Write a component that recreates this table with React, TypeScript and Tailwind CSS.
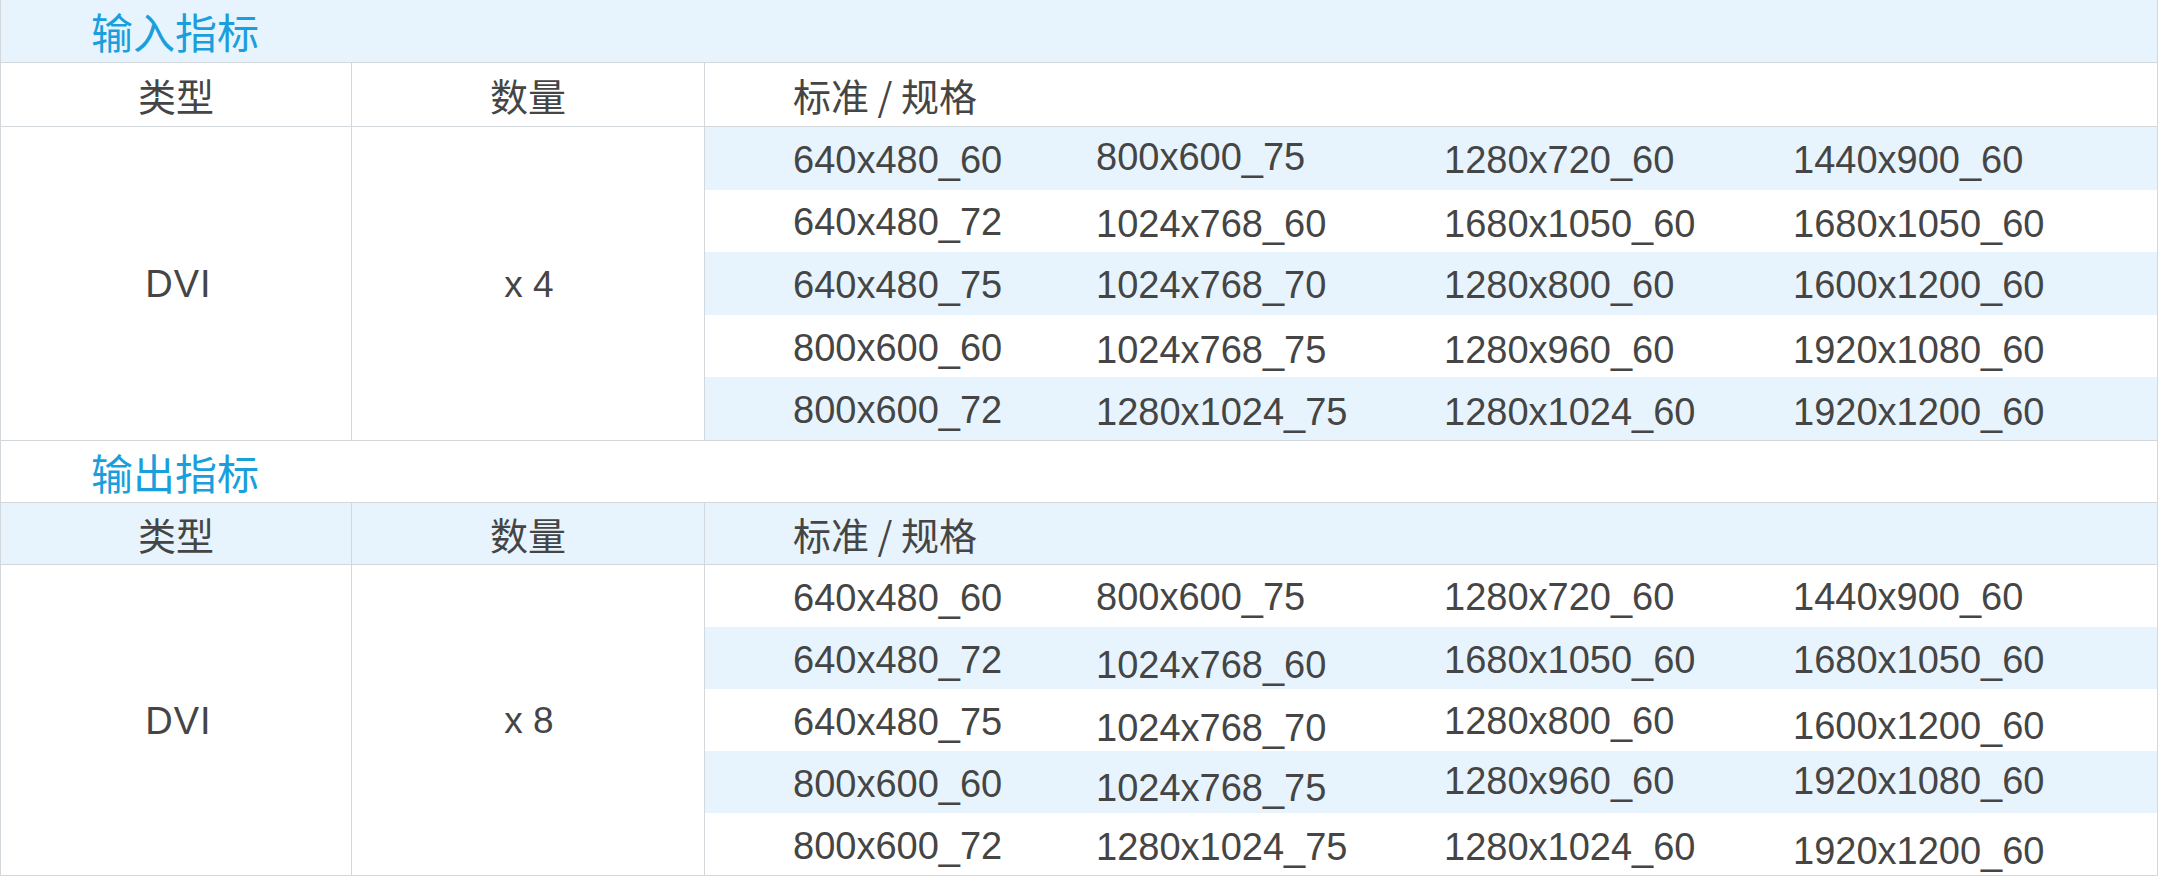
const specRows: string[][] = [
  ["640x480_60", "800x600_75", "1280x720_60", "1440x900_60"],
  ["640x480_72", "1024x768_60", "1680x1050_60", "1680x1050_60"],
  ["640x480_75", "1024x768_70", "1280x800_60", "1600x1200_60"],
  ["800x600_60", "1024x768_75", "1280x960_60", "1920x1080_60"],
  ["800x600_72", "1280x1024_75", "1280x1024_60", "1920x1200_60"],
];

// small per-cell vertical nudges, the source table is not perfectly aligned
const inputNudge: string[][] = [
  ["", "-translate-y-[3px]", "", ""],
  ["", "translate-y-[2px]", "translate-y-[2px]", "translate-y-[2px]"],
  ["", "", "", ""],
  ["", "translate-y-[2px]", "translate-y-[2px]", "translate-y-[2px]"],
  ["", "translate-y-[2px]", "translate-y-[2px]", "translate-y-[2px]"],
];

const outputNudge: string[][] = [
  ["", "-translate-y-[1px]", "-translate-y-[1px]", "-translate-y-[1px]"],
  ["", "translate-y-[5px]", "", ""],
  ["", "translate-y-[6px]", "-translate-y-[1px]", "translate-y-[4px]"],
  ["", "translate-y-[4px]", "-translate-y-[3px]", "-translate-y-[3px]"],
  ["", "translate-y-[1px]", "translate-y-[1px]", "translate-y-[5px]"],
];

interface SectionProps {
  readonly title: string;
  readonly count: string;
  readonly titleBg: string;
  readonly headerBg: string;
  readonly titleH: string;
  readonly headerH: string;
  readonly dataH: string;
  readonly stripeOdd: boolean;
  readonly nudge: string[][];
}

function SpecSection({ title, count, titleBg, headerBg, titleH, headerH, dataH, stripeOdd, nudge }: SectionProps) {
  return (
    <section>
      <div className={`${titleH} ${titleBg} flex items-center border-b border-[#d3d8dc] pl-[90px]`}>
        <h2 className="font-['Noto_Sans_CJK_SC',sans-serif] text-[42px] leading-none font-normal text-[#1a9fdc]">{title}</h2>
      </div>

      <div className={`${headerH} ${headerBg} grid grid-cols-[351px_353px_1fr] border-b border-[#d3d8dc] font-['Noto_Sans_CJK_SC',sans-serif] text-[38px] text-[#454545]`}>
        <div className="flex items-center justify-center border-r border-[#d3d8dc]">类型</div>
        <div className="flex items-center justify-center border-r border-[#d3d8dc]">数量</div>
        <div className="flex items-center pl-[88px]">标准 / 规格</div>
      </div>

      <div className={`${dataH} grid grid-cols-[351px_353px_1fr] border-b border-[#d3d8dc] text-[#454545]`}>
        <div className="flex items-center justify-center border-r border-[#d3d8dc] pt-[2px] pl-[5px] text-[38px] tracking-[1px]">DVI</div>
        <div className="flex items-center justify-center border-r border-[#d3d8dc] pt-[2px] pl-[2px] text-[37px]">{count}</div>
        <div className="grid grid-rows-5">
          {specRows.map((row, i) => {
            const striped = stripeOdd ? i % 2 === 0 : i % 2 === 1;
            return (
              <div
                key={i}
                className={`grid grid-cols-[303px_348px_349px_1fr] items-center pl-[88px] pt-[4px] text-[38px] ${striped ? "bg-[#e7f4fd]" : "bg-white"}`}
              >
                {row.map((v, j) => (
                  <span key={j} className={nudge[i][j]}>
                    {v}
                  </span>
                ))}
              </div>
            );
          })}
        </div>
      </div>
    </section>
  );
}

export default function App() {
  return (
    <div className="w-[2158px] border-x border-[#d3d8dc] bg-white font-['Liberation_Sans','Noto_Sans_CJK_SC',sans-serif]">
      <SpecSection
        title="输入指标"
        count="x 4"
        titleBg="bg-[#e7f4fd]"
        headerBg="bg-white"
        titleH="h-[63px]"
        headerH="h-[64px]"
        dataH="h-[314px]"
        stripeOdd
        nudge={inputNudge}
      />
      <SpecSection
        title="输出指标"
        count="x 8"
        titleBg="bg-white"
        headerBg="bg-[#e7f4fd]"
        titleH="h-[62px]"
        headerH="h-[62px]"
        dataH="h-[311px]"
        stripeOdd={false}
        nudge={outputNudge}
      />
    </div>
  );
}
